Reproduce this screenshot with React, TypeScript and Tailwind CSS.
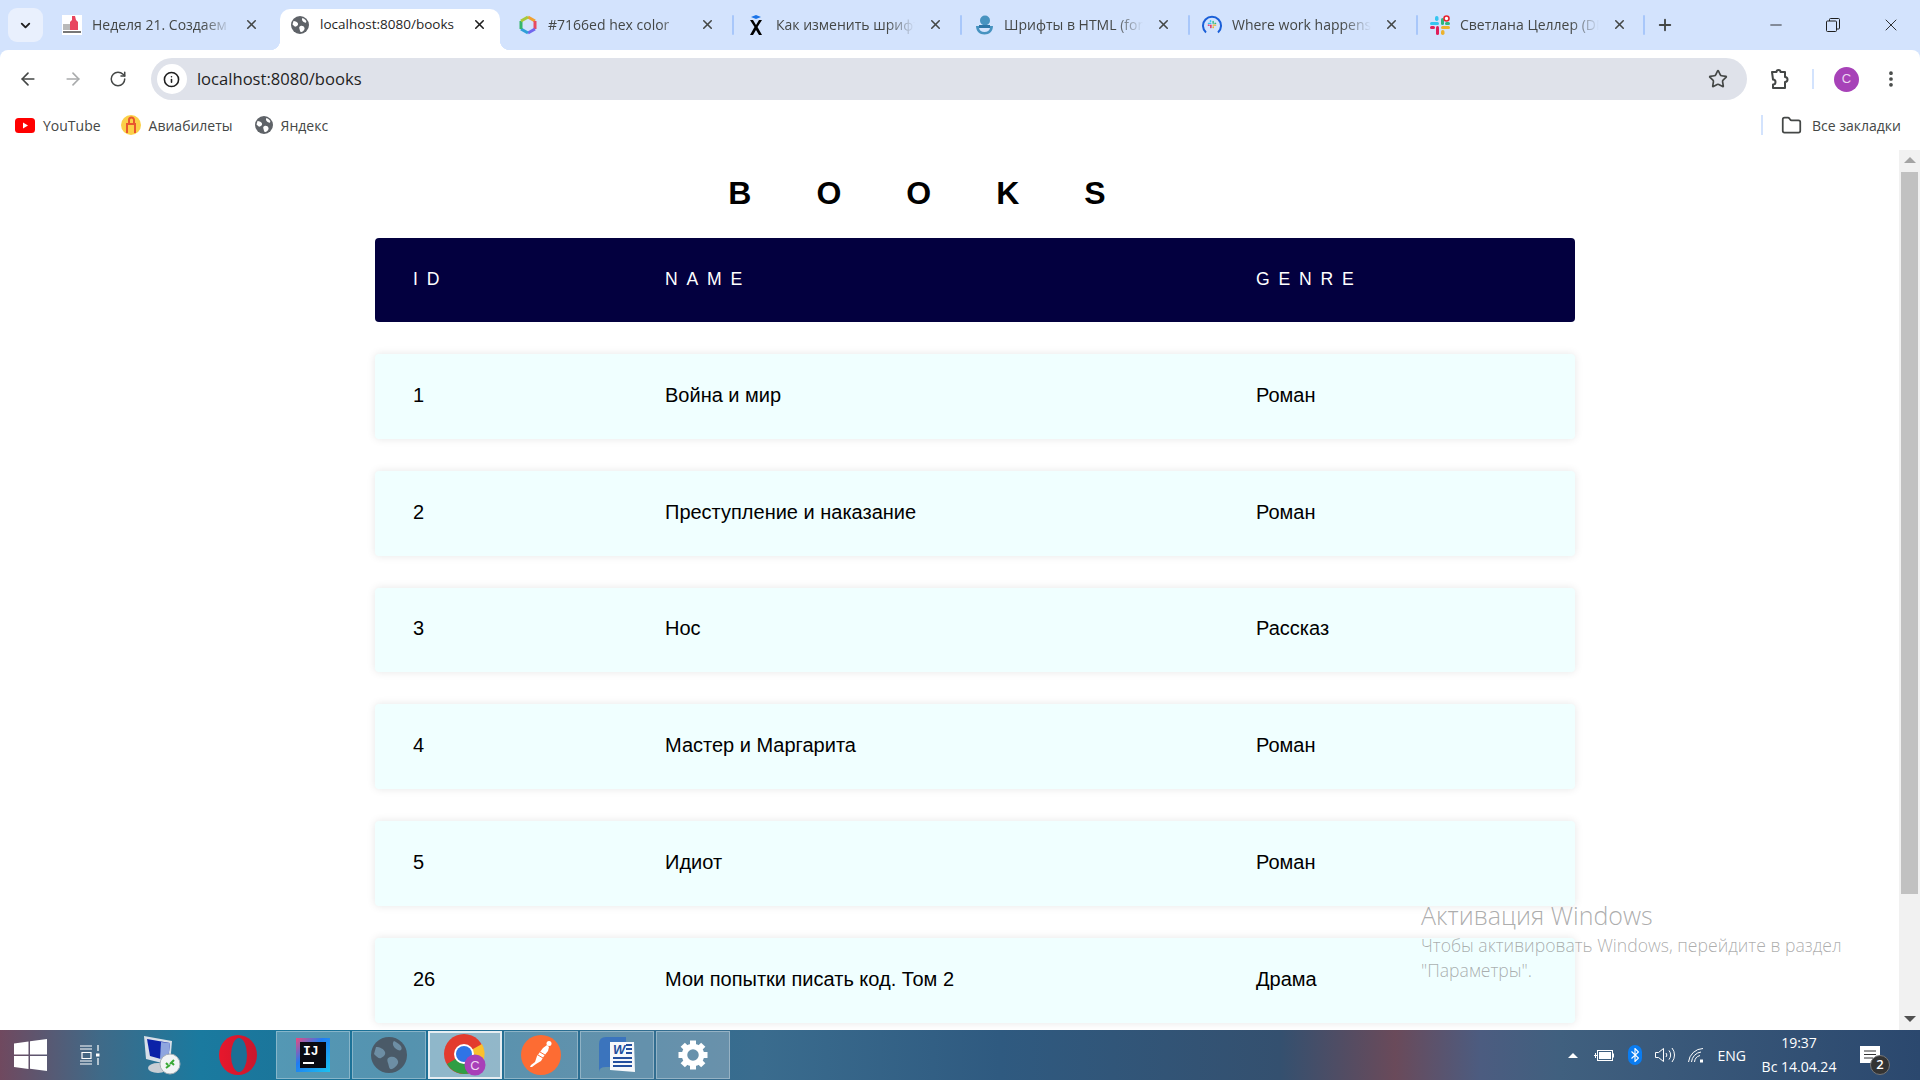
import { ArrowLeft, ArrowRight, RotateCw, Star, Folder, EllipsisVertical, Info, X, Plus, Minus, ChevronDown } from "lucide-react";

// вкладки браузера: у каждой своя иконка и заголовок
const tabs = [
  { id: "week", title: "Неделя 21. Создаем приложение", icon: <SchoolIcon /> },
  { id: "books", title: "localhost:8080/books", icon: <GlobeIcon />, active: true },
  { id: "hex", title: "#7166ed hex color", icon: <HexIcon /> },
  { id: "font", title: "Как изменить шрифт в", icon: <SkillIcon /> },
  { id: "html", title: "Шрифты в HTML (font)", icon: <DropIcon /> },
  { id: "slack1", title: "Where work happens", icon: <SlackRingIcon /> },
  { id: "slack2", title: "Светлана Целлер (DM)", icon: <SlackIcon badge /> },
];

const books = [
  { id: 1, name: "Война и мир", genre: "Роман" },
  { id: 2, name: "Преступление и наказание", genre: "Роман" },
  { id: 3, name: "Нос", genre: "Рассказ" },
  { id: 4, name: "Мастер и Маргарита", genre: "Роман" },
  { id: 5, name: "Идиот", genre: "Роман" },
  { id: 26, name: "Мои попытки писать код. Том 2", genre: "Драма" },
];

function GlobeIcon({ size = 18, color = "#5f6368", land = "#fff" }: { size?: number; color?: string; land?: string }) {
  return (
    <svg width={size} height={size} viewBox="0 0 18 18">
      <circle cx="9" cy="9" r="9" fill={color} />
      <path d="M2.500 5c2 0 4 1 4.500 2.500S6 10 5 10.500 3 10 1.500 8.500zM9.500 10c2-.5 3.500.5 4 2s-1.500 3.500-3 4-1.500-1.500-2-3S8 10.500 9.500 10zM11.500 2c1 .5 2 1 3 2s1 2 .5 2.500-2 0-3-1-1.500-2.500-.5-3.500z" fill={land} />
    </svg>
  );
}

function SchoolIcon() {
  return (
    <svg width="20" height="20" viewBox="0 0 20 20">
      <rect width="20" height="20" fill="#fff" />
      <rect x="1" y="9" width="9" height="6" fill="#b9b9b9" />
      <path d="M10 1h3l1 4 2 2v8H8V7l2-2z" fill="#e8455f" />
      <rect x="1" y="16" width="18" height="2" fill="#777" />
    </svg>
  );
}

function HexIcon() {
  return (
    <svg width="20" height="20" viewBox="0 0 20 20" fill="none" strokeWidth="3">
      <path d="M10 2l7 4" stroke="#f0a030" />
      <path d="M17 6v8" stroke="#e84a5f" />
      <path d="M17 14l-7 4" stroke="#7166ed" />
      <path d="M10 18l-7-4" stroke="#2f9fd8" />
      <path d="M3 14V6" stroke="#35b56a" />
      <path d="M3 6l7-4" stroke="#a8c83a" />
    </svg>
  );
}

function SkillIcon() {
  return (
    <svg width="14" height="20" viewBox="0 0 14 20">
      <path d="M7 0l5 2-5 2-5-2z" fill="#1a73e8" />
      <path d="M1 5h3l3 5 3-5h3l-4.500 7L13 20h-3l-3-5-3 5H1l4.500-8z" fill="#000" />
    </svg>
  );
}

function DropIcon() {
  return (
    <svg width="17" height="20" viewBox="0 0 17 20">
      <circle cx="9" cy="5.500" r="5" fill="#4793c0" />
      <path d="M0 11h17c0 5-3.500 8.500-8.500 8.500S0 16 0 11zm3 2c.5 2.500 2.500 4 5.500 4s5-1.500 5.500-4z" fill="#4793c0" />
      <rect x="3" y="10" width="11" height="3" fill="#2d76a8" />
    </svg>
  );
}

function SlackIcon({ badge }: { badge?: boolean }) {
  return (
    <svg width="20" height="20" viewBox="0 0 20 20">
      <rect x="0" y="7" width="9" height="3" rx="1.500" fill="#36c5f0" />
      <rect x="5" y="1" width="3.500" height="5" rx="1.700" fill="#36c5f0" />
      <rect x="11" y="11" width="9" height="3" rx="1.500" fill="#ecb22e" />
      <rect x="11" y="15" width="3.500" height="5" rx="1.700" fill="#ecb22e" />
      <rect x="6" y="11" width="3" height="9" rx="1.500" fill="#e01e5a" />
      <rect x="0" y="11" width="5" height="3" rx="1.500" fill="#e01e5a" />
      <rect x="11" y="3" width="3" height="7" rx="1.500" fill="#2eb67d" />
      <rect x="15" y="7" width="5" height="3" rx="1.500" fill="#2eb67d" />
      {badge && <circle cx="16.500" cy="3.500" r="2.500" fill="#fff" stroke="#e8232e" strokeWidth="1.600" />}
    </svg>
  );
}

function SlackRingIcon() {
  return (
    <svg width="20" height="20" viewBox="0 0 20 20">
      <path d="M4 17.500A9 9 0 1 1 16 17.500" fill="none" stroke="#1a5fd8" strokeWidth="2" />
      <g transform="translate(5.500 4.500) scale(0.45)">
        <SlackIcon />
      </g>
    </svg>
  );
}

function YoutubeIcon() {
  return (
    <svg width="20" height="15" viewBox="0 0 20 15">
      <rect width="20" height="15" rx="3.500" fill="#f00" />
      <path d="M8 4.500l5 3-5 3z" fill="#fff" />
    </svg>
  );
}

function TicketIcon() {
  return (
    <svg width="20" height="20" viewBox="0 0 20 20">
      <circle cx="10" cy="10" r="10" fill="#fbd048" />
      <path d="M6 18V9h8v9" fill="none" stroke="#e8572f" strokeWidth="2" />
      <path d="M8 9V5a2.500 2.500 0 0 1 5 0v3" fill="none" stroke="#e8572f" strokeWidth="2" />
    </svg>
  );
}

function PuzzleIcon() {
  return (
    <svg width="22" height="22" viewBox="0 0 22 22" fill="none" stroke="#444746" strokeWidth="2" strokeLinejoin="round">
      <path d="M3 4h4.500a2 2 0 0 1 4 0H16v5a2 2 0 0 1 0 5v6H4v-3.500a2.500 2.500 0 0 0 0-5z" />
    </svg>
  );
}

function RestoreIcon() {
  return (
    <svg width="14" height="14" viewBox="0 0 14 14" fill="none" stroke="#1f1f1f">
      <rect x="0.500" y="3" width="10" height="10.500" rx="1" />
      <path d="M3.500 3V1.500a1 1 0 0 1 1-1h8a1 1 0 0 1 1 1V10a1 1 0 0 1-1 1H11" />
    </svg>
  );
}

function WindowsLogo() {
  return (
    <svg width="33" height="32" viewBox="0 0 33 32" fill="#fff">
      <path d="M0 4.500l14.500-2v13H0zM16 2.300L33 0v15.500H16zM0 17h14.500v13L0 28zM16 17h17v15l-17-2.300z" />
    </svg>
  );
}

function TaskViewIcon() {
  return (
    <svg width="20" height="20" viewBox="0 0 20 20" fill="none" stroke="#fff" strokeWidth="1.200">
      <path d="M0 1h12M0 4h12M2 7.500h9v6H2zM0 16h12M0 19h12" />
      <path d="M18 0v6M18 13v7" />
      <rect x="16" y="8.500" width="3.500" height="3" fill="#fff" stroke="none" />
    </svg>
  );
}

function RdpIcon() {
  return (
    <svg width="42" height="40" viewBox="0 0 42 40">
      <path d="M3 1l28 5-2 24-24-6z" fill="#d7dfe8" />
      <path d="M6 4l23 4-2 18-18-5z" fill="#0b22a8" />
      <path d="M20 7l9 1-2 18-8-2z" fill="#8fa6df" />
      <ellipse cx="17" cy="33" rx="10" ry="5" fill="#c9ced4" />
      <circle cx="29" cy="29" r="10" fill="#f2f4f5" stroke="#a8b0b6" />
      <path d="M25 33l4-3M33 25l-4 4M25 28l2 2M33 30l-2-2" stroke="#3aa935" strokeWidth="2" />
    </svg>
  );
}

function OperaIcon() {
  return (
    <svg width="38" height="40" viewBox="0 0 38 40">
      <defs>
        <linearGradient id="op" x1="0" y1="0" x2="1" y2="0">
          <stop offset="0" stopColor="#e8172c" />
          <stop offset="1" stopColor="#c8182e" />
        </linearGradient>
      </defs>
      <ellipse cx="19" cy="20" rx="19" ry="20" fill="url(#op)" />
      <ellipse cx="20" cy="20" rx="8" ry="17" fill="#1c6f95" />
    </svg>
  );
}

function IdeaIcon() {
  return (
    <svg width="34" height="34" viewBox="0 0 34 34">
      <defs>
        <linearGradient id="ij" x1="0" y1="0" x2="1" y2="1">
          <stop offset="0" stopColor="#f0487b" />
          <stop offset="0.400" stopColor="#1f7cf2" />
          <stop offset="1" stopColor="#1ac3f0" />
        </linearGradient>
      </defs>
      <rect width="34" height="34" fill="url(#ij)" />
      <rect x="4" y="4" width="26" height="26" fill="#0a0a12" />
      <text x="7" y="17" fill="#fff" fontSize="13" fontWeight="700" fontFamily="'Liberation Mono', monospace">IJ</text>
      <rect x="7" y="24" width="11" height="2" fill="#fff" />
    </svg>
  );
}

function ChromeIcon() {
  return (
    <svg width="42" height="42" viewBox="0 0 42 42">
      <circle cx="20" cy="20" r="20" fill="#e33b2e" />
      <path d="M20 20L38 10a20 20 0 0 1-12 29z" fill="#fbc02d" />
      <path d="M20 20L26 39A20 20 0 0 1 3 30z" fill="#2f9e44" />
      <circle cx="20" cy="20" r="10" fill="#fff" />
      <circle cx="20" cy="20" r="8" fill="#2f74e6" />
      <circle cx="31" cy="31" r="10.500" fill="#a83fb8" />
      <text x="31" y="36" textAnchor="middle" fill="#efd6f4" fontSize="13" fontFamily="'Liberation Sans', sans-serif">C</text>
    </svg>
  );
}

function PostmanIcon() {
  return (
    <svg width="40" height="40" viewBox="0 0 40 40">
      <circle cx="20" cy="20" r="20" fill="#fd6c33" />
      <path d="M9 32l1-2 4-3 2-6 6-8 4-3 2 2-1 4-4 5-3 5-5 3-4 3z" fill="#fff" />
      <path d="M17 20l5 3M19 17l5 3" stroke="#fd6c33" strokeWidth="1" />
      <circle cx="28" cy="8.500" r="2.500" fill="#fff" />
    </svg>
  );
}

function WordIcon() {
  return (
    <svg width="38" height="38" viewBox="0 0 38 38">
      <path d="M1 8Q1 1 8 1h20v30H8q-7 0-7 5z" fill="#3b74bd" />
      <path d="M12 6h24l1 30-25-2z" fill="#f6f8fb" />
      <text x="15" y="18" fill="#234f9e" fontSize="13" fontWeight="700" fontStyle="italic" fontFamily="'Liberation Sans', sans-serif">W</text>
      <path d="M28 9h6M28 13h6M28 17h6M15 22h19M15 26h19M15 30h19" stroke="#234f9e" strokeWidth="2" />
    </svg>
  );
}

// сплошная шестерёнка параметров
function GearIcon() {
  const teeth = [0, 45, 90, 135, 180, 225, 270, 315];
  return (
    <svg width="30" height="30" viewBox="0 0 30 30">
      <circle cx="15" cy="15" r="8.500" fill="none" stroke="#fff" strokeWidth="5.500" />
      {teeth.map((deg) => (
        <rect key={deg} x="12" y="0.500" width="6" height="6" fill="#fff" transform={`rotate(${deg} 15 15)`} />
      ))}
    </svg>
  );
}

function BatteryIcon() {
  return (
    <svg width="20" height="14" viewBox="0 0 20 14" fill="none" stroke="#fff">
      <rect x="3.500" y="2.500" width="15" height="10" />
      <rect x="5" y="4" width="12" height="7" fill="#fff" stroke="none" />
      <rect x="18.500" y="5.500" width="1.500" height="4" fill="#fff" stroke="none" />
      <path d="M0 7.500h4M1.500 5v5" />
    </svg>
  );
}

function BluetoothIcon() {
  return (
    <div className="flex h-[20px] w-[14px] items-center justify-center rounded-[7px] bg-[#0a7cf0]">
      <svg width="8" height="14" viewBox="0 0 8 14" fill="none" stroke="#fff" strokeWidth="1.100">
        <path d="M0.500 3.500l7 6.500-3.500 3.500V0.500L7.500 4l-7 6.500" />
      </svg>
    </div>
  );
}

function VolumeIcon() {
  return (
    <svg width="20" height="16" viewBox="0 0 20 16" fill="none" stroke="#fff">
      <path d="M0.500 5.500h3l5-4v13l-5-4h-3z" />
      <path d="M11 6a3 3 0 0 1 0 4M14 3.500a7 7 0 0 1 0 9M17 1a11 11 0 0 1 0 14" />
    </svg>
  );
}

function WifiIcon() {
  return (
    <svg width="16" height="16" viewBox="0 0 16 16" fill="none" stroke="#fff">
      <path d="M0.500 15A15 15 0 0 1 15 1.500M3.500 15A11 11 0 0 1 13 5M6.500 15A7.500 7.500 0 0 1 12 8.500" />
      <rect x="12" y="12.500" width="3" height="3" fill="#fff" stroke="none" />
    </svg>
  );
}

function ChatIcon() {
  return (
    <svg width="20" height="18" viewBox="0 0 20 18">
      <path d="M0 0h20v17H0z" fill="#fff" />
      <path d="M4 5h12M4 8.500h12M4 12h9" stroke="#333" strokeWidth="1" />
    </svg>
  );
}

// плитка закреплённого приложения на панели задач
function TaskTile({ children, active }: { children: React.ReactNode; active?: boolean }) {
  return (
    <div
      className={
        active
          ? "flex h-[48px] w-[74px] items-center justify-center border-2 border-[#e6edf2] bg-white/50"
          : "flex h-[48px] w-[74px] items-center justify-center border border-white/30 bg-white/25"
      }
    >
      {children}
    </div>
  );
}

export default function App() {
  return (
    <div className="flex h-screen w-[1920px] flex-col overflow-hidden bg-[#d3e3fd] font-['Liberation_Sans',sans-serif]">
      {/* полоса вкладок */}
      <div className="flex h-[50px] shrink-0 items-end pl-[8px] font-['Open_Sans',sans-serif] text-[14px] text-[#444746]">
        <div className="mb-[8px] mr-[5px] flex h-[34px] w-[35px] items-center justify-center rounded-[9px] bg-[#e9f0fd]">
          <ChevronDown size={15} strokeWidth={3} color="#1f1f1f" />
        </div>
        {tabs.map((tab, i) => (
          <div
            key={tab.id}
            className={
              tab.active
                ? "relative mx-[4px] flex h-[41px] w-[220px] items-center rounded-t-[10px] bg-white pb-[10px] pl-[10px] text-[#1f1f1f] before:absolute before:bottom-0 before:-left-[10px] before:h-[10px] before:w-[10px] before:bg-[radial-gradient(circle_at_0_0,transparent_10px,#fff_10.500px)] before:content-[''] after:absolute after:bottom-0 after:-right-[10px] after:h-[10px] after:w-[10px] after:bg-[radial-gradient(circle_at_100%_0,transparent_10px,#fff_10.500px)] after:content-['']"
                : "flex h-[41px] w-[228px] items-center pb-[10px] pl-[14px]"
            }
          >
            {i > 2 && <div className="-ml-[14px] mr-[12px] h-[20px] w-[2px] rounded bg-[#a8c7fa]" />}
            <div className="flex w-[20px] shrink-0 items-center justify-center">{tab.icon}</div>
            <span
              className={
                tab.active
                  ? "ml-[10px] w-[142px] whitespace-nowrap text-[13.500px]"
                  : "ml-[10px] w-[142px] overflow-hidden whitespace-nowrap [mask-image:linear-gradient(90deg,#000_78%,transparent_98%)]"
              }
            >
              {tab.title}
            </span>
            <X size={15} strokeWidth={2.500} className="ml-[10px] shrink-0" color={tab.active ? "#1f1f1f" : "#444746"} />
          </div>
        ))}
        <div className="mb-[15px] ml-[-1px] h-[20px] w-[2px] rounded bg-[#a8c7fa]" />
        <Plus size={18} strokeWidth={2.500} color="#444746" className="mb-[16px] ml-[11px]" />
        <div className="mb-[15px] ml-auto flex items-center gap-[41px] pr-[19px]">
          <Minus size={18} strokeWidth={1.200} color="#1f1f1f" />
          <RestoreIcon />
          <X size={20} strokeWidth={1.100} color="#1f1f1f" />
        </div>
      </div>

      {/* адресная строка */}
      <div className="flex h-[58px] shrink-0 items-center rounded-t-[8px] bg-white pl-[18px] pr-[19px]">
        <ArrowLeft size={20} strokeWidth={2} color="#444746" />
        <ArrowRight size={20} strokeWidth={2} color="#a9abac" className="ml-[25px]" />
        <RotateCw size={18} strokeWidth={2} color="#444746" className="ml-[26px]" />
        <div className="ml-[24px] flex h-[42px] w-[1598px] items-center rounded-full bg-[#dfe2ea] pl-[6px] pr-[19px]">
          <div className="flex h-[30px] w-[30px] items-center justify-center rounded-full bg-white">
            <Info size={17} strokeWidth={2.200} color="#1f1f1f" />
          </div>
          <span className="ml-[10px] pt-[1px] font-['Open_Sans',sans-serif] text-[16.600px] text-[#1f1f1f]">localhost:8080/books</span>
          <Star size={20} strokeWidth={2} color="#444746" className="ml-auto" />
        </div>
        <div className="ml-[22px]">
          <PuzzleIcon />
        </div>
        <div className="ml-[21px] h-[20px] w-[2px] bg-[#d3e3fd]" />
        <div className="ml-[20px] flex h-[25px] w-[25px] items-center justify-center rounded-full bg-[#a742b8] text-[13px] text-[#ecd6f0]">
          C
        </div>
        <EllipsisVertical size={20} strokeWidth={2.500} color="#444746" className="ml-[22px]" />
      </div>

      {/* панель закладок */}
      <div className="flex h-[42px] shrink-0 items-center bg-white pb-[8px] pl-[15px] pr-[19px] font-['Open_Sans',sans-serif] text-[14px] text-[#444746]">
        <YoutubeIcon />
        <span className="ml-[8px]">YouTube</span>
        <div className="ml-[20px]">
          <TicketIcon />
        </div>
        <span className="ml-[8px]">Авиабилеты</span>
        <div className="ml-[22px]">
          <GlobeIcon />
        </div>
        <span className="ml-[8px]">Яндекс</span>
        <div className="ml-auto h-[20px] w-[2px] bg-[#d3e3fd]" />
        <Folder size={21} strokeWidth={2} color="#444746" className="ml-[18px]" />
        <span className="ml-[10px]">Все закладки</span>
      </div>

      {/* страница */}
      <div className="relative flex min-h-0 flex-1 bg-white">
        <main className="min-w-0 flex-1 overflow-hidden pl-[375px]">
          <h1 className="mt-[25px] w-[1149px] text-center text-[32px] font-bold leading-[37px] tracking-[65px] text-black">
            BOOKS
          </h1>
          <div className="mt-[26px] flex w-[1200px] flex-col gap-[32px]">
            <div className="grid h-[84px] grid-cols-[252px_591px_1fr] items-center rounded-[4px] bg-[#03003f] px-[38px] pb-[2px] text-[17.600px] tracking-[8.800px] text-white">
              <span>ID</span>
              <span>NAME</span>
              <span>GENRE</span>
            </div>
            {books.map((book) => (
              <div
                key={book.id}
                className="grid h-[84.800px] shrink-0 grid-cols-[252px_591px_1fr] items-center rounded-[4px] bg-[#f0ffff] px-[38px] pb-[3px] text-[20px] text-black shadow-[0_0_9px_rgba(0,0,0,0.1)]"
              >
                <span>{book.id}</span>
                <span>{book.name}</span>
                <span>{book.genre}</span>
              </div>
            ))}
          </div>
        </main>

        {/* полоса прокрутки */}
        <div className="flex w-[21px] shrink-0 flex-col items-center bg-[#f1f1f1]">
          <div className="mt-[7px] h-0 w-0 border-x-[6px] border-b-[6px] border-x-transparent border-b-[#a3a3a3]" />
          <div className="mt-[9px] h-[722px] w-[17px] bg-[#c1c1c1]" />
          <div className="mt-auto mb-[8px] h-0 w-0 border-x-[6px] border-t-[6px] border-x-transparent border-t-[#505050]" />
        </div>

        {/* водяной знак активации */}
        <div className="pointer-events-none absolute left-[1421px] top-[749px] font-['Open_Sans',sans-serif] font-light text-[#8a8a8a]/70">
          <div className="text-[25px] leading-[33px]">Активация Windows</div>
          <div className="mt-[1px] text-[17.600px] leading-[25px]">
            Чтобы активировать Windows, перейдите в раздел
            <br />
            "Параметры".
          </div>
        </div>
      </div>

      {/* панель задач */}
      <div className="flex h-[50px] shrink-0 items-center bg-[linear-gradient(90deg,#70495f_0px,#3f6a88_100px,#1a7a9f_200px,#1c6f95_400px,#3a6c8e_760px,#2f5a80_1000px,#34506f_1280px,#6a4a5a_1395px,#4c5c80_1480px,#40607f_1560px,#2b486e_1920px)] font-['Open_Sans',sans-serif] text-white">
        <div className="ml-[14px]">
          <WindowsLogo />
        </div>
        <div className="ml-[33px]">
          <TaskViewIcon />
        </div>
        <div className="ml-[41px]">
          <RdpIcon />
        </div>
        <div className="ml-[36px]">
          <OperaIcon />
        </div>
        <div className="ml-[19px] flex gap-[2px]">
          <TaskTile>
            <IdeaIcon />
          </TaskTile>
          <TaskTile>
            <GlobeIcon size={36} color="#4a5a68" land="#6d8ea4" />
          </TaskTile>
          <TaskTile active>
            <ChromeIcon />
          </TaskTile>
          <TaskTile>
            <PostmanIcon />
          </TaskTile>
          <TaskTile>
            <WordIcon />
          </TaskTile>
          <TaskTile>
            <GearIcon />
          </TaskTile>
        </div>
        <div className="ml-auto flex items-center pr-[40px]">
          <div className="h-0 w-0 border-x-[5px] border-b-[5px] border-x-transparent border-b-white" />
          <div className="ml-[16px]">
            <BatteryIcon />
          </div>
          <div className="ml-[14px]">
            <BluetoothIcon />
          </div>
          <div className="ml-[13px]">
            <VolumeIcon />
          </div>
          <div className="ml-[13px]">
            <WifiIcon />
          </div>
          <span className="ml-[14px] text-[14px]">ENG</span>
          <div className="ml-[16px] flex w-[74px] flex-col items-center text-[14px] leading-[24px]">
            <span>19:37</span>
            <span className="whitespace-nowrap">Вс 14.04.24</span>
          </div>
          <div className="relative ml-[24px]">
            <ChatIcon />
            <div className="absolute -bottom-[11px] -right-[10px] flex h-[20px] w-[20px] items-center justify-center rounded-full border border-[#777] bg-[#333] text-[13px] font-semibold">
              2
            </div>
          </div>
        </div>
      </div>
    </div>
  );
}
